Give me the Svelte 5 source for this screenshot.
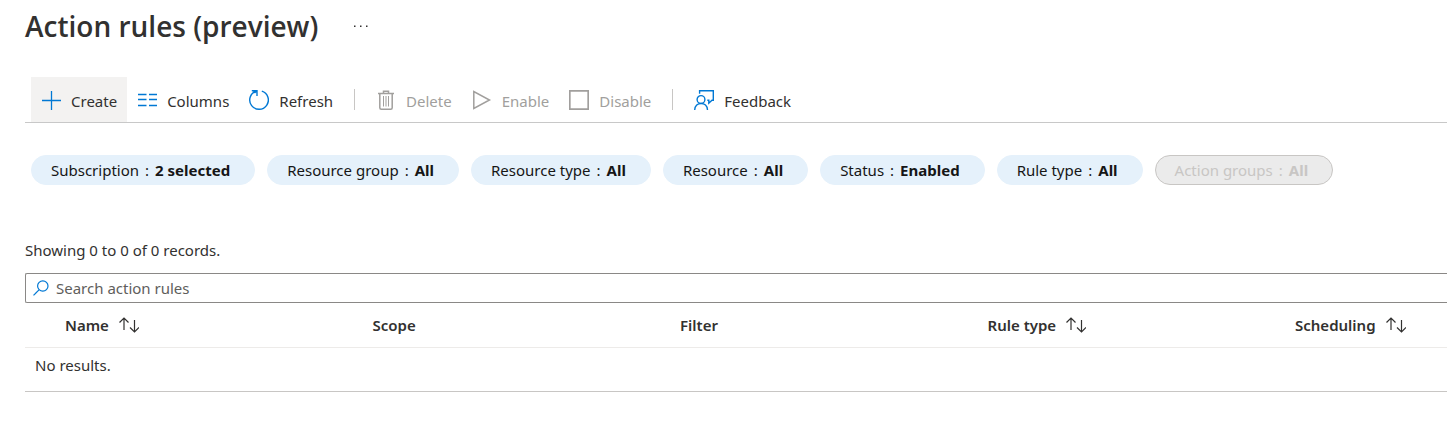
<script>
  const filters = [
    { label: 'Subscription', value: '2 selected' },
    { label: 'Resource group', value: 'All' },
    { label: 'Resource type', value: 'All' },
    { label: 'Resource', value: 'All' },
    { label: 'Status', value: 'Enabled' },
    { label: 'Rule type', value: 'All' },
    { label: 'Action groups', value: 'All', disabled: true }
  ];

  const columns = [
    { title: 'Name', sortable: true },
    { title: 'Scope' },
    { title: 'Filter' },
    { title: 'Rule type', sortable: true },
    { title: 'Scheduling', sortable: true }
  ];

  const commands = [
    { icon: 'add', label: 'Create', active: true },
    { icon: 'columns', label: 'Columns' },
    { icon: 'refresh', label: 'Refresh' },
    { divider: true },
    { icon: 'delete', label: 'Delete', disabled: true },
    { icon: 'play', label: 'Enable', disabled: true },
    { icon: 'square', label: 'Disable', disabled: true },
    { divider: true },
    { icon: 'feedback', label: 'Feedback' }
  ];

  let query = $state('');
</script>

{#snippet icon(name)}
  <svg class="icon" viewBox="0 0 20 20" aria-hidden="true">
    {#if name === 'add'}
      <path stroke-width="1.300" d="M10.500 1v19M1 10.500h19" />
    {:else if name === 'columns'}
      <path stroke-width="1.300" d="M1 4.500h8.500M12 4.500h8M1 9.500h8.500M12 9.500h8M1 15.500h8.500M12 15.500h8" />
    {:else if name === 'refresh'}
      <path stroke-width="1.400" d="M12.800 1.100A9.300 9.300 0 1 1 7 1.200M2.800.8h5.200v5.200M8 .8L5.500 3" />
    {:else if name === 'delete'}
      <path stroke-width="1.500" d="M2 3.500h16M7.500 3.500V1.300h5v2.200M3.800 3.500v14.200q0 1.500 1.500 1.500h9.400q1.500 0 1.500-1.500V3.500" />
      <path d="M7.500 6v10.500M10 6v10.500M12.500 6v10.500" />
    {:else if name === 'play'}
      <path stroke-width="1.500" d="M1.800 1.500v17L17.500 10z" />
    {:else if name === 'square'}
      <path stroke-width="1.700" d="M.8.800h18.400v18.400H.8z" />
    {:else if name === 'feedback'}
      <path stroke-width="1.400" d="M5.600 3.800V.7h13.700v9.600h-1.300l-3.200 2.900v-2.900h-1.500" />
      <circle cx="7" cy="9.500" r="3.900" stroke-width="1.400" />
      <path stroke-width="1.400" d="M.7 20c0-8.700 12.800-8.700 12.800 0" />
    {/if}
  </svg>
{/snippet}

<main>
  <header>
    <h1>Action rules (preview)</h1>
    <button class="more" aria-label="More options">
      <svg viewBox="0 0 16 4" aria-hidden="true">
        <path d="M1 1.500h1.500V3H1zM7 1.500h1.500V3H7zM13 1.500h1.500V3H13z" />
      </svg>
    </button>
  </header>

  <div class="toolbar" role="toolbar" aria-label="Commands">
    {#each commands as command}
      {#if command.divider}
        <span class="divider"></span>
      {:else}
        <button class="command" class:active={command.active} disabled={command.disabled}>
          {@render icon(command.icon)}
          <span>{command.label}</span>
        </button>
      {/if}
    {/each}
  </div>

  <div class="filters">
    {#each filters as filter}
      <button class="pill" disabled={filter.disabled}>
        <span>{filter.label}</span>
        <span>:</span>
        <strong>{filter.value}</strong>
      </button>
    {/each}
  </div>

  <p class="count">Showing 0 to 0 of 0 records.</p>

  <label class="search">
    <svg viewBox="0 0 16 16" aria-hidden="true">
      <circle cx="9.800" cy="6" r="5.200" />
      <path d="M6 9.800L.5 15.300" />
    </svg>
    <input type="text" aria-label="Search action rules" placeholder="Search action rules" bind:value={query} />
  </label>

  <table>
    <thead>
      <tr>
        {#each columns as column}
          <th scope="col">
            {#if column.sortable}
              <button class="sort">
                {column.title}
                <svg viewBox="0 0 20 16" aria-hidden="true">
                  <path d="M5 13V1M.5 5.500L5 1l4.500 4.500M15.500 3v12M11 10.500l4.500 4.500 4.500-4.500" />
                </svg>
              </button>
            {:else}
              {column.title}
            {/if}
          </th>
        {/each}
      </tr>
    </thead>
    <tbody>
      <tr>
        <td colspan="5">No results.</td>
      </tr>
    </tbody>
  </table>
</main>

<style>
  :global(body) {
    margin: 0;
    background: #fff;
  }

  main {
    padding: 8px 0 0 25px;
    font-family: "Noto Sans", "Open Sans", sans-serif;
    font-size: 15px;
    line-height: 20px;
    color: #323130;
  }

  button {
    font: inherit;
    color: inherit;
    background: none;
    border: 0;
    padding: 0;
    white-space: nowrap;
  }

  header {
    display: flex;
    align-items: center;
    gap: 35px;
    height: 36px;
  }

  h1 {
    margin: 0;
    font-family: "Open Sans", "Noto Sans", sans-serif;
    font-size: 28px;
    line-height: 36px;
    font-weight: 600;
  }

  .more {
    display: flex;
  }

  .more svg {
    width: 16px;
    height: 4px;
    fill: #323130;
  }

  .toolbar {
    display: flex;
    align-items: center;
    margin-top: 33px;
    padding-left: 6px;
    border-bottom: 1px solid #c8c8c8;
  }

  .command {
    display: flex;
    align-items: center;
    gap: 10px;
    height: 45px;
    padding: 2px 10px 0;
  }

  .command.active {
    background: #f3f2f1;
  }

  .command:disabled {
    color: #a19f9d;
  }

  .icon {
    width: 20px;
    height: 20px;
    margin-bottom: 2px;
    fill: none;
    stroke: #0078d4;
    stroke-width: 1;
  }

  .command:disabled .icon {
    stroke: #a19f9d;
  }

  .divider {
    width: 1px;
    height: 21px;
    margin: 0 11px;
    background: #c8c6c4;
  }

  .filters {
    display: flex;
    gap: 12px;
    margin-top: 32px;
    padding-left: 6px;
  }

  .pill {
    display: flex;
    align-items: center;
    gap: 6px;
    height: 30px;
    padding: 0 24px 0 19px;
    border: 1px solid #e5f1fb;
    border-radius: 15px;
    background: #e5f1fb;
    color: #161616;
  }

  .pill:disabled {
    border-color: #c8c6c4;
    background: #ebebeb;
    color: #c8c6c4;
  }

  strong {
    font-weight: 700;
  }

  .count {
    margin: 55px 0 13px;
  }

  .search {
    display: flex;
    align-items: center;
    gap: 7px;
    height: 28px;
    padding-left: 7px;
    border: 1px solid #8a8886;
    border-right: 0;
    border-radius: 2px 0 0 2px;
  }

  .search svg {
    width: 16px;
    height: 16px;
    fill: none;
    stroke: #0078d4;
    stroke-width: 1.2;
  }

  input {
    flex: 1;
    min-width: 0;
    padding: 0;
    border: 0;
    outline: 0;
    background: none;
    font: inherit;
    color: inherit;
  }

  input::placeholder {
    color: #605e5c;
    opacity: 1;
  }

  table {
    width: 100%;
    table-layout: fixed;
    border-collapse: collapse;
  }

  th {
    box-sizing: border-box;
    height: 44px;
    width: 21.625%;
    padding: 0 0 0 40px;
    border-bottom: 1px solid #edebe9;
    font-weight: 600;
    text-align: left;
  }

  th:last-child {
    width: auto;
  }

  .sort {
    display: flex;
    align-items: center;
    gap: 10px;
  }

  .sort svg {
    width: 20px;
    height: 16px;
    fill: none;
    stroke: #323130;
    stroke-width: 1.2;
  }

  td {
    height: 44px;
    padding: 0 10px 8px;
    box-sizing: border-box;
    border-bottom: 1px solid #c8c6c4;
  }
</style>
